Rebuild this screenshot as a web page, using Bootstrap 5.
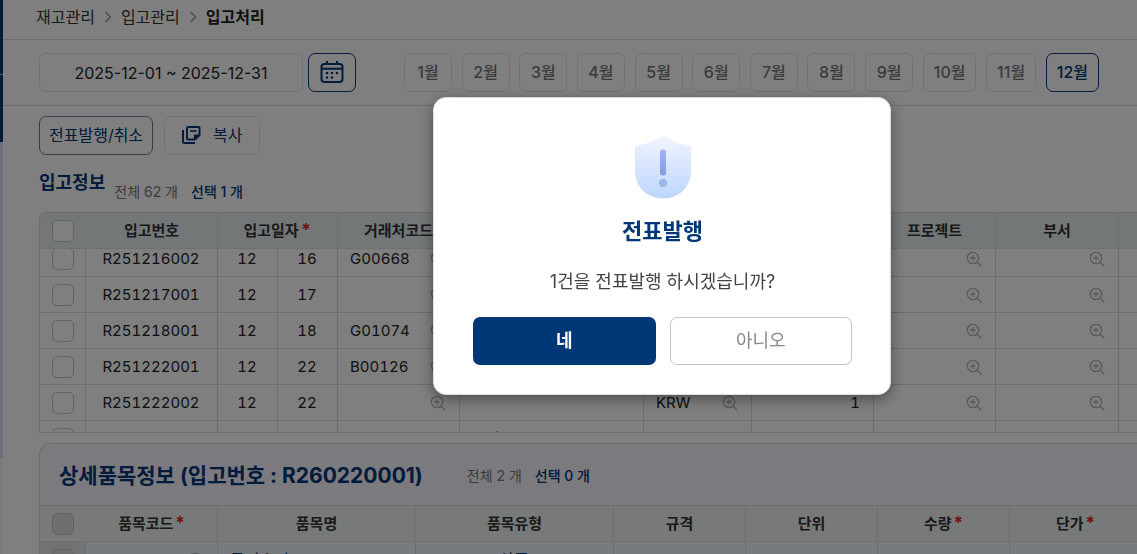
<!DOCTYPE html>
<html lang="ko">
<head>
<meta charset="utf-8">
<meta name="viewport" content="width=device-width, initial-scale=1">
<title>입고처리</title>
<link href="https://cdn.jsdelivr.net/npm/bootstrap@5.3.0/dist/css/bootstrap.min.css" rel="stylesheet">
<style>
:root { --navy: #003777; --line: #d9dbdc; }
body { font-family: Inter, "Noto Sans CJK KR", sans-serif; font-size: 16px; line-height: 24px; color: #222; height: 100vh; overflow: hidden; }
.side-strip { width: 3px; flex: none; }
.side-top { height: 142px; background: var(--navy); }
.side-top::before { content: ""; display: block; height: 75px; border-bottom: 1px solid #b8c6dc; }
.side-menu { height: 316px; background: #dcdcfc; }
.side-foot { background: #f4f5f8; }
.crumbs { height: 40px; padding: 0 0 6px 33px; gap: 9px; border-bottom: 1px solid var(--line); }
.crumbs a { color: #333; text-decoration: none; }
.filter-bar { height: 66px; padding: 0 38px 1px 36px; border-bottom: 1px solid var(--line); }
.date-box { width: 264px; height: 39px; padding: 2px 0 0; border: 1px solid #e2e4e6; border-radius: 7px; text-align: center; color: #222; }
.line-btn { height: 39px; padding: 0 9px 1px; border: 1px solid #e2e4e6; border-radius: 7px; background: #fff; color: var(--navy); line-height: 24px; }
.line-btn.on { border-color: var(--navy); color: var(--navy); }
.line-btn.strong { border-color: #6c7f98; }
.cal-btn { width: 48px; margin-left: 5px; }
.month-list { margin-left: 48px; }
.month-btn { min-width: 48px; padding: 0 10px; color: #777; font-weight: 500; }
.action-bar { padding: 10px 36px 0; gap: 11px; }
.list-head { padding: 15px 36px 0; }
.sec-title { font-size: 18px; line-height: 26px; font-weight: 700; color: var(--navy); }
.count-text { font-size: 14px; line-height: 20px; color: #777; gap: 13px; }
.list-head .count-text { padding: 12px 0 10px 9px; }
.count-text .sel { color: var(--navy); font-weight: 500; }
.grid-box { margin-left: 36px; border: 1px solid var(--line); border-right: 0; border-radius: 8px 0 0 0; overflow: hidden; scrollbar-width: none; }
.main-grid { height: 221px; font-size: 15px; font-feature-settings: "tnum"; }
.data-grid { width: 1260px; table-layout: fixed; border-collapse: separate; border-spacing: 0; }
.data-grid th { position: sticky; top: 0; z-index: 1; height: 36px; padding: 0; text-align: center; font-size: 15px; font-weight: 700; color: #333; background: #e9eef0; border-right: 1px solid #dde2e5; border-bottom: 1px solid #dde2e5; }
.data-grid th.first { border-right: 0; padding: 0; }
.data-grid td { height: 36px; padding: 0 13px 0 12px; border-right: 1px solid var(--line); border-bottom: 1px solid var(--line); overflow: hidden; white-space: nowrap; }
.data-grid td.first { padding: 0; text-align: center; }
.req { color: #e3222c; margin-left: 2px; font-size: 17px; line-height: 20px; }
.pick { display: block; width: 22px; height: 22px; margin: 0 auto; appearance: none; border: 1px solid #c2c4c6; border-radius: 5px; background: #fff; }
.pick:disabled { background: #dfdfdf; }
.look { width: 16px; height: 16px; color: #b4b4b4; flex: none; }
.detail-box { margin: 10px 0 0 36px; border: 1px solid var(--line); border-right: 0; border-radius: 12px 0 0 0; overflow: hidden; background: #f5f5fe; }
.detail-head { height: 61px; padding: 2px 19px 0; gap: 44px; }
.detail-title { font-size: 21px; line-height: 30px; font-weight: 700; color: var(--navy); }
.detail-grid th { border-top: 1px solid #dde2e5; height: 37px; background: #f0f4f5; }
.detail-grid td { background: #eff6fd; color: var(--navy); }
.detail-grid td.first { background: #e4e4e6; }
.ask-layer { background: rgba(0,0,0,.5); padding: 97px 0 0 187px; z-index: 1050; }
.ask-box { width: 458px; padding: 37px 38px 29px 39px; border: 1px solid #ddd; border-radius: 13px; background: #fff; box-shadow: 0 4px 14px rgba(0,0,0,.4); }
.ask-title { margin: 16px 0 0; font-size: 22px; line-height: 32px; font-weight: 700; color: var(--navy); }
.ask-text { margin: 21px 0 0; font-size: 18px; line-height: 28px; color: #444; }
.ask-btns { margin-top: 21px; gap: 14px; }
.ask-btns .btn { height: 48px; padding: 0 0 2px; border-radius: 7px; font-size: 18px; }
.btn-yes, .btn-yes:hover { background: var(--navy); color: #fff; font-weight: 700; }
.btn-no { border-color: #c4c4c4; color: #888; }
</style>
</head>
<body>
<svg class="d-none" aria-hidden="true">
  <symbol id="look" viewBox="0 0 16 16"><g fill="none" stroke="currentColor" stroke-width="1.3" stroke-linecap="round"><circle cx="7" cy="7" r="5.7"/><path d="M11.2 11.2 15 15M7 4.8v4.4M4.8 7h4.4"/></g></symbol>
  <symbol id="chev" viewBox="0 0 8 12"><path d="M1.5 1l5 5-5 5" fill="none" stroke="#999" stroke-width="1.4"/></symbol>
</svg>
<div class="d-flex h-100">
  <aside class="side-strip d-flex flex-column">
    <div class="side-top"></div><div class="side-menu"></div><div class="side-foot flex-grow-1"></div>
  </aside>
  <main class="flex-grow-1 overflow-hidden">
    <nav class="crumbs d-flex align-items-center">
      <a href="#">재고관리</a>
      <svg width="8" height="12"><use href="#chev"/></svg>
      <a href="#">입고관리</a>
      <svg width="8" height="12"><use href="#chev"/></svg>
      <strong>입고처리</strong>
    </nav>
    <div class="filter-bar d-flex align-items-center">
      <input class="date-box" type="text" aria-label="조회기간" value="2025-12-01 ~ 2025-12-31">
      <button class="line-btn on cal-btn d-flex align-items-center justify-content-center" aria-label="달력">
        <svg width="24" height="24" viewBox="0 0 24 24" fill="none" stroke="currentColor" stroke-width="2"><rect x="1.500" y="4" width="21" height="18" rx="3"/><path d="M2 8.700h20M7 1v3.500M17 1v3.500" /><g fill="currentColor" stroke="none"><circle cx="7" cy="13" r="1.300"/><circle cx="12" cy="13" r="1.300"/><circle cx="17" cy="13" r="1.300"/><circle cx="7" cy="17.500" r="1.300"/><circle cx="12" cy="17.500" r="1.300"/></g></svg>
      </button>
      <div class="month-list d-flex flex-grow-1 justify-content-between" id="months"></div>
    </div>
    <div class="action-bar d-flex">
      <button class="line-btn strong">전표발행/취소</button>
      <button class="line-btn d-flex align-items-center px-3 gap-2">
        <svg width="20" height="20" viewBox="0 0 20 20" class="me-1" fill="none" stroke="currentColor" stroke-width="2"><path d="M2 5v11.500A1.500 1.500 0 0 0 3.500 18H14"/><path d="M7 2h10.500A1 1 0 0 1 18.500 3v7l-4.500 4.500H7A1 1 0 0 1 6 13.500V3A1 1 0 0 1 7 2z"/><path d="M13 15V9.500h6L13.500 15z" fill="currentColor" stroke="none"/><path d="M9 6h6.500" stroke-width="1.600"/></svg>
        복사
      </button>
    </div>
    <div class="list-head d-flex align-items-start">
      <h2 class="sec-title mb-0">입고정보</h2>
      <div class="count-text d-flex"><span>전체 62 개</span><span class="sel">선택 1 개</span></div>
    </div>
    <div class="grid-box main-grid" id="scroller">
      <table class="data-grid">
        <colgroup><col style="width:46px"><col style="width:132px"><col style="width:60px"><col style="width:60px"><col style="width:122px"><col style="width:184px"><col style="width:108px"><col style="width:122px"><col style="width:122px"><col style="width:123px"><col></colgroup>
        <thead><tr><th class="first"><input class="pick" type="checkbox" aria-label="전체 선택"></th><th>입고번호</th><th colspan="2">입고일자<span class="req">*</span></th><th>거래처코드</th><th>거래처명</th><th>통화</th><th>환율</th><th>프로젝트</th><th>부서</th><th></th></tr></thead>
        <tbody id="rows"></tbody>
      </table>
    </div>
    <section class="detail-box">
      <div class="detail-head d-flex align-items-center">
        <h2 class="detail-title mb-0">상세품목정보 (입고번호 : R260220001)</h2>
        <div class="count-text d-flex"><span>전체 2 개</span><span class="sel">선택 0 개</span></div>
      </div>
      <table class="data-grid detail-grid">
        <colgroup><col style="width:46px"><col style="width:132px"><col style="width:198px"><col style="width:198px"><col style="width:132px"><col style="width:132px"><col style="width:132px"><col style="width:132px"><col></colgroup>
        <thead><tr><th class="first"><input class="pick" type="checkbox" disabled aria-label="전체 선택"></th><th>품목코드<span class="req">*</span></th><th>품목명</th><th>품목유형</th><th>규격</th><th>단위</th><th>수량<span class="req">*</span></th><th>단가<span class="req">*</span></th><th></th></tr></thead>
        <tbody><tr><td class="first"><input class="pick" type="checkbox" disabled aria-label="선택"></td><td><div class="d-flex align-items-center justify-content-between"><span>Pl</span><svg class="look"><use href="#look"/></svg></div></td><td>물리수리"</td><td class="text-center">상품</td><td></td><td></td><td class="text-end">1</td><td class="text-end">1,000</td><td></td></tr></tbody>
      </table>
    </section>
  </main>
</div>
<div class="ask-layer position-fixed top-0 start-0 w-100 h-100 d-flex justify-content-center align-items-start">
  <div class="ask-box text-center" role="dialog" aria-modal="true" aria-labelledby="askTitle">
    <svg class="d-block mx-auto" width="58" height="64" viewBox="0 0 58 64" aria-hidden="true">
      <defs><linearGradient id="sg" x1="0" y1="0" x2="0" y2="1"><stop offset="0" stop-color="#f1f5fe"/><stop offset="1" stop-color="#bdd6fd"/></linearGradient><linearGradient id="bg" x1="0" y1="0" x2="0" y2="1"><stop offset="0" stop-color="#9fb3f0"/><stop offset="1" stop-color="#839de3"/></linearGradient></defs>
      <path d="M29 1Q31 1 33 2.500Q43 8.500 56 11Q57 11.500 57 13V35C57 52 45 63.500 29 63.500S1 52 1 35V13Q1 11.500 2 11Q15 8.500 25 2.500Q27 1 29 1z" fill="url(#sg)"/>
      <rect x="26" y="14.500" width="6" height="26" rx="2.500" fill="url(#bg)"/><circle cx="29" cy="48" r="4.200" fill="#9db7e8"/>
    </svg>
    <h1 class="ask-title" id="askTitle">전표발행</h1>
    <p class="ask-text">1건을 전표발행 하시겠습니까?</p>
    <div class="ask-btns d-flex"><button class="btn btn-yes flex-fill w-50">네</button><button class="btn btn-no flex-fill w-50">아니오</button></div>
  </div>
</div>
<script src="https://cdn.jsdelivr.net/npm/bootstrap@5.3.0/dist/js/bootstrap.bundle.min.js"></script>
<script>
document.getElementById('months').innerHTML = Array.from({length: 12}, (_, i) =>
  `<button class="line-btn month-btn ${i === 11 ? 'on' : ''}">${i + 1}월</button>`).join('');
const look = '<svg class="look"><use href="#look"/></svg>';
const find = t => `<td><div class="d-flex align-items-center justify-content-between"><span>${t}</span>${look}</div></td>`;
const data = [
  ['R251216002', '12', '16', 'G00668', ''], ['R251217001', '12', '17', '', ''],
  ['R251218001', '12', '18', 'G01074', ''], ['R251222001', '12', '22', 'B00126', ''],
  ['R251222002', '12', '22', '', ''], ['R251223001', '12', '23', 'G00668', '스내부 품목']];
document.getElementById('rows').innerHTML = data.map(r =>
  `<tr><td class="first"><input class="pick" type="checkbox" aria-label="${r[0]}"></td><td class="text-center">${r[0]}</td><td class="text-center">${r[1]}</td><td class="text-center">${r[2]}</td>${find(r[3])}<td>${r[4]}</td>${find('KRW')}<td class="text-end">1</td>${find('')}${find('')}<td></td></tr>`).join('');
document.getElementById('scroller').scrollTop = 8;
</script>
</body>
</html>
